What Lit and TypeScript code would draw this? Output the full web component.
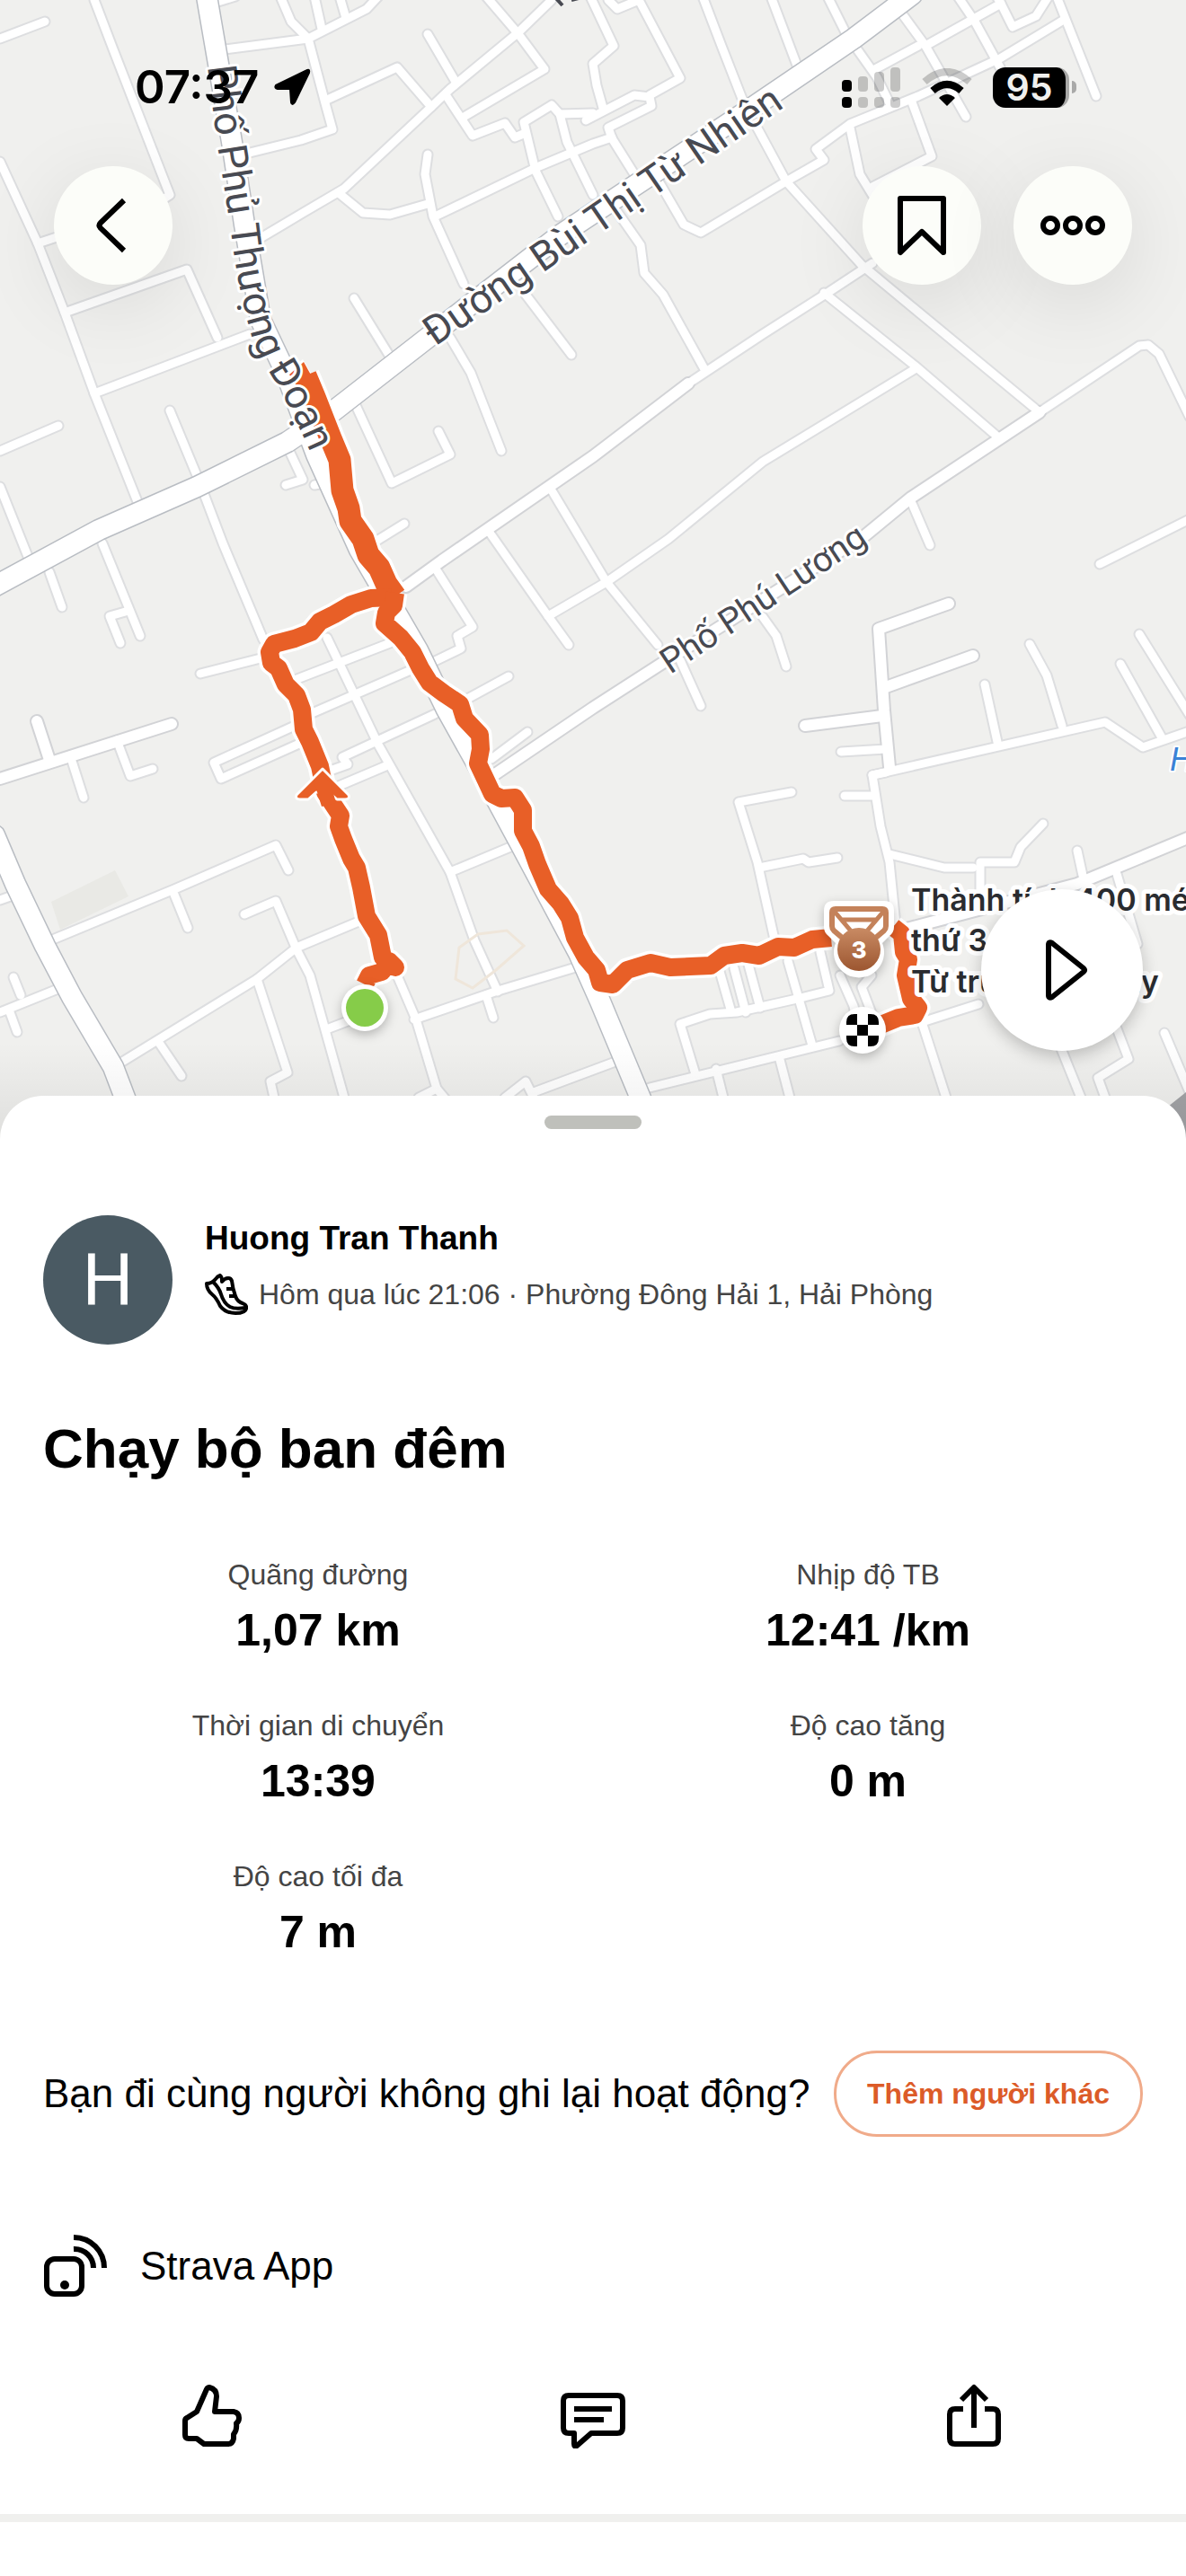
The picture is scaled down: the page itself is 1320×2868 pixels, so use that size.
import { LitElement, html, css, svg } from 'lit'
import { customElement, property } from 'lit/decorators.js'

const MINOR_ROADS = [
  // north-west
  '0,43 50,24',
  '105,0 126,55 189,217 172,228 42,271',
  '0,180 42,271 72,348 105,438 156,566',
  '72,348 208,300 242,376',
  '105,438 278,372',
  '0,502 65,474',
  '0,542 32,622',
  '189,457 221,534 248,605 293,712',
  '114,605 156,708',
  '143,680 122,686 134,716',
  '55,637 69,676',
  // north
  '250,55 343,43 408,10 421,-4',
  '236,4 262,-4',
  '312,-4 324,24 343,43 362,115 370,144 335,156 278,170',
  '350,-4 358,32',
  '378,-4 385,20',
  '364,111 442,75 480,119',
  '476,38 507,91',
  '290,265 337,237 383,210 480,119 501,99 577,36 614,0',
  '541,-4 577,38 606,77 518,129',
  '497,107 526,151 562,137 573,153 585,148',
  '660,217 631,158 623,127 614,117 583,136 596,190 621,241',
  '623,127 660,126',
  '484,241 598,186 660,160 681,153',
  '476,172 473,194 482,241 516,316',
  '377,215 404,237 434,239 476,227',
  '394,332 434,397',
  '585,328 636,395',
  '501,376 524,415 558,502',
  '394,447 436,538 501,506 488,480',
  '322,502 337,534 318,540',
  '350,540 362,538',
  '421,601 450,583',
  '614,546 675,648 732,718',
  '757,735 780,786',
  '545,593 610,686 633,718',
  '610,686 675,648 744,600 849,514 1018,411',
  '486,635 526,698 509,708 513,722 480,738',
  // north-east
  '652,134 706,106 723,108 725,118 677,142 681,154 706,194',
  '732,200 761,250 780,259 875,202 917,178 908,166 946,138 1022,107 1113,65 1184,22',
  '656,-6 683,51 660,71 664,95 671,120',
  '677,0 687,10 711,0 757,87 723,106',
  '782,-4 803,51 828,115 875,202 959,295 1018,344 1157,459',
  '858,-4 889,78',
  '921,-4 942,38 976,86 990,115',
  '974,77 1022,51',
  '1003,14 1030,51 1075,130',
  '1030,51 1114,4 1108,-6',
  '1066,-4 1085,24 1113,75',
  '1112,0 1127,30 1153,18 1167,-4',
  '1176,-4 1220,107',
  '946,142 957,194 971,217',
  '1014,111 1037,174 971,208',
  '685,233 713,273 717,304 738,328 784,411',
  '766,427 849,372 921,326 971,293',
  '917,326 1018,407 1110,486',
  '1157,459 1268,385 1278,384 1290,394 1324,464',
  '1014,558 1035,607',
  '1224,628 1324,578',
  '849,687 864,708 875,742',
  // south-west
  '223,750 290,733',
  '78,841 93,888',
  '130,824 145,864 170,856',
  '328,757 434,716',
  '345,795 455,747',
  '328,808 238,849 246,867 333,828',
  '364,710 421,829 501,971 528,1047 554,1104',
  '370,857 387,851 381,843 484,795',
  '370,878 429,853',
  '501,971 568,943',
  '522,777 566,753',
  '547,845 587,815',
  '61,1045 194,990 307,941 321,969',
  '194,996 209,1033',
  '0,1002 17,996',
  '272,1018 307,1003 330,1057 345,1086 383,1222',
  '133,1184 286,1090 330,1055 404,1024',
  '286,1090 320,1194 301,1204 305,1222',
  '177,1161 202,1198',
  '0,1127 72,1098',
  '15,1088 23,1108',
  '11,1127 19,1149',
  '366,1145 387,1137',
  '442,1086 463,1135 486,1212 496,1224',
  '466,1222 486,1212',
  '461,1135 551,1104 644,1076',
  '541,1108 549,1133',
  '562,1222 585,1204 594,1222',
  '594,1216 685,1182',
  // south-east
  '936,837 986,834',
  '986,860 971,863 980,920 990,960 997,1030',
  '971,863 1230,804 1272,832 1324,814',
  '1096,762 1110,826',
  '1146,717 1165,752 1182,808',
  '1247,739 1294,823',
  '1268,706 1324,796',
  '940,886 974,886',
  '881,882 822,893 843,960 862,1046',
  '845,966 894,956 900,960 932,955',
  '990,951 1051,966 1083,966',
  '1161,917 1136,943 1129,960 1091,960 1091,990',
  '1199,947 1207,984',
  '1243,973 1266,1051',
  '774,1196 757,1140 790,1129 820,1127 887,1112 923,1103 913,1060',
  '723,1211 934,1159',
  '1026,1138 1089,1118',
  '800,1078 814,1127',
  '817,1078 830,1127',
  '833,1074 846,1122',
  '877,1070 904,1164',
  '868,1180 879,1222',
  '797,1190 805,1222',
  '1026,1138 1053,1222',
  '935,1086 950,1120 954,1140',
  '970,1086 959,1099 970,1128 972,1140',
  '1178,1160 1203,1222',
  '1241,1140 1256,1179 1222,1200 1230,1222',
  '1296,1150 1324,1216',
]

const MEDIUM_ROADS = [
  '41,803 55,846',
  '0,867 191,806',
  '452,653 492,624 660,508 766,427',
  '551,862 660,788 736,739 963,596 1014,554 1157,459',
  '1056,672 978,700 984,791 990,854',
  '1083,730 986,765',
  '896,808 982,797',
  '1009,1034 1199,984 1324,932',
]

const MAJOR_ROADS = [
  '229,-10 243,71 258,158 272,250 290,356 318,415 352,506 400,612 465,724 497,790 540,867 581,943 644,1061 668,1115 716,1230',
  '-10,655 110,590 219,542 320,492 372,457 476,376 623,262 828,126 950,43 1015,-6',
  '-6,930 17,984 50,1053 80,1110 126,1188 142,1230',
]

const ROUTE_OUT =
  '406,1096 411,1086 425,1082 433,1070 440,1077 426,1066 421,1041 408,1020 402,988 397,966 391,956 382,934 377,920 379,908 371,896 362,882 ' +
  '356,853 345,826 338,812 336,790 330,774 318,762 310,744 302,738 300,726 305,717 328,711 346,704 356,692 372,684 391,673 413,666 436,665'
const ROUTE_SHARED = '340,418 350,442 368,488 378,512 381,546 388,566 390,580 404,600 410,618 422,632 430,650 440,664'
const ROUTE_BACK =
  '440,660 438,674 430,682 428,694 446,710 459,726 468,744 478,760 494,772 512,784 517,800 534,818 535,834 532,850 541,869 548,884 558,889 573,888 582,902 ' +
  '582,925 591,942 598,962 610,990 624,1006 634,1022 640,1044 652,1066 664,1080 668,1094 682,1096 698,1080 724,1072 746,1077 791,1075 806,1064 826,1061 ' +
  '845,1064 866,1054 884,1055 904,1046 925,1044'
const ROUTE_END = '994,1032 1004,1040 1006,1060 1011,1068 1008,1086 1014,1112 1022,1122 1018,1130 1000,1133 978,1142'

const lines = (cls: string, roads: string[]) =>
  roads.map((points) => svg`<polyline class=${cls} points=${points}></polyline>`)

@customElement('route-map')
export class RouteMap extends LitElement {
  static styles = [
    css`
      :host {
        display: block;
        background: #f0f0ee;
      }

      svg {
        display: block;
        width: 100%;
        height: auto;
      }

      polyline {
        fill: none;
        stroke-linecap: round;
        stroke-linejoin: round;
      }

      .minor-case { stroke: #dddee0; stroke-width: 13px; }
      .minor { stroke: #ffffff; stroke-width: 9px; }
      .medium-case { stroke: #d2d3d6; stroke-width: 16px; }
      .medium { stroke: #ffffff; stroke-width: 12px; }
      .major-case { stroke: #b9bdc3; stroke-width: 25px; }
      .major { stroke: #ffffff; stroke-width: 22px; }

      .halo { stroke: #ffffff; stroke-width: 27px; stroke-linecap: butt; }
      .route { stroke: #e85f27; stroke-width: 20px; stroke-linecap: butt; }
      .halo.wide { stroke-width: 32px; }
      .route.wide { stroke-width: 25px; }

      text {
        paint-order: stroke;
        stroke: #ffffff;
        stroke-linejoin: round;
      }

      .street {
        font: 400 39px Roboto, sans-serif;
        fill: #484a52;
        stroke-width: 6px;
      }

      .street.major-name {
        font-size: 45px;
      }

      .place {
        font: 600 34px Inter, sans-serif;
        fill: #2a2c30;
        stroke-width: 10px;
      }

      .water {
        font: italic 500 36px "Liberation Sans", sans-serif;
        fill: #3b82d6;
        stroke-width: 4px;
      }

      .rank {
        font: 800 26px Inter, sans-serif;
        fill: #ffffff;
        stroke: none;
        text-anchor: middle;
      }

      .marker {
        filter: drop-shadow(0 4px 6px rgba(0, 0, 0, 0.25));
      }
    `
  ];

  render () {
    return html`
      <svg viewBox="0 0 1320 1280" role="img" aria-label="Bản đồ">
        <defs>
          <path id="street-1" d="M231 74 L242 162 L257 257 Q264 318 280 374 Q290 402 305 423 Q330 464 365 550"></path>
          <path id="street-2" d="M484 386 L920 87"></path>
          <path id="street-3" d="M746 751 L1000 582"></path>
          <linearGradient id="bronze" x1="0" y1="0" x2="0" y2="1">
            <stop offset="0" stop-color="#c98b64"></stop>
            <stop offset="1" stop-color="#9c5630"></stop>
          </linearGradient>
          <linearGradient id="fade" x1="0" y1="0" x2="0" y2="1">
            <stop offset="0" stop-color="#000000" stop-opacity="0"></stop>
            <stop offset="1" stop-color="#000000" stop-opacity="0.08"></stop>
          </linearGradient>
        </defs>

        <polygon points="57,1004 128,969 143,998 67,1035" fill="#e9e9e5"></polygon>
        ${lines('minor-case', MINOR_ROADS)}
        ${lines('medium-case', MEDIUM_ROADS)}
        ${lines('minor', MINOR_ROADS)}
        ${lines('major-case', MAJOR_ROADS)}
        ${lines('medium', MEDIUM_ROADS)}
        ${lines('major', MAJOR_ROADS)}
        <polygon points="511,1055 532,1040 564,1036 583,1053 552,1080 526,1100 507,1090"
          fill="none" stroke="#efe6da" stroke-width="3"></polygon>
        <polygon points="1290,1240 1320,1216 1320,1280 1290,1280" fill="#a2a3a6"></polygon>
        <path d="M617 -4 L626 6 M636 0 L648 -3" stroke="#484a52" stroke-width="4" fill="none"></path>

        <path d="M337 400 L318 416 L342 452 L362 442 Z" fill="#ffffff"></path>
        ${lines('halo wide', [ROUTE_SHARED])}
        ${lines('halo', [ROUTE_OUT, ROUTE_BACK, ROUTE_END])}
        <path d="M338 403 L322 417 L342 448 L362 446 Z" fill="#e85f27"></path>
        ${lines('route wide', [ROUTE_SHARED])}
        ${lines('route', [ROUTE_OUT, ROUTE_BACK, ROUTE_END])}
        <path d="M359 856 L388 885 Q390 890 384 890 L375 890 L366 882 H352 L343 890 H334 Q328 890 330 885 Z"
          fill="#e85f27" stroke="#ffffff" stroke-width="3" stroke-linejoin="round"></path>
        <path d="M359 862 L368 872 L374 894 L358 898 L350 872 Z" fill="#e85f27"></path>

        <text class="street major-name"><textPath href="#street-1">Phố Phủ Thượng Đoạn</textPath></text>
        <text class="street major-name"><textPath href="#street-2">Đường Bùi Thị Từ Nhiên</textPath></text>
        <text class="street"><textPath href="#street-3">Phố Phú Lương</textPath></text>
        <text class="water" x="1302" y="858">H</text>
        <text class="place" x="1014" y="1014">Thành tích 400 mét</text>
        <text class="place" x="1014" y="1059">thứ 3</text>
        <text class="place" x="1014" y="1105">Từ trước đến nay</text>

        <rect y="1160" width="1320" height="120" fill="url(#fade)"></rect>

        <circle class="marker" cx="406" cy="1122" r="26" fill="#ffffff"></circle>
        <circle cx="406" cy="1122" r="21" fill="#86cc49"></circle>

        <g class="marker">
          <circle cx="960" cy="1147" r="26" fill="#ffffff"></circle>
        </g>
        <path d="M954 1129 V1141 H942 V1138 Q942 1129 951 1129 Z M966 1129 H969 Q978 1129 978 1138 V1141 H966 Z
          M942 1153 H954 V1165 H951 Q942 1165 942 1156 Z M966 1153 H978 V1156 Q978 1165 969 1165 H966 Z M954 1141 H966 V1153 H954 Z"></path>

        <g class="marker">
          <path d="M928 1003 H984 Q995 1003 995 1014 V1032 Q995 1038 990 1042 L982 1050 A28 28 0 1 1 930 1050 L922 1042 Q917 1038 917 1032 V1014 Q917 1003 928 1003 Z"
            fill="#ffffff"></path>
        </g>
        <g fill="none" stroke="#c4825a" stroke-width="6">
          <path d="M942 1048 L928 1036 Q926 1034 926 1031 V1016 Q926 1012 930 1012 H982 Q986 1012 986 1016 V1031 Q986 1034 984 1036 L970 1048"></path>
          <path d="M928 1014 L950 1040 M984 1014 L962 1040 M936 1024 H976" stroke-width="5"></path>
        </g>
        <circle cx="956" cy="1057" r="24" fill="url(#bronze)"></circle>
        <text class="rank" x="956" y="1067">3</text>
      </svg>
    `
  }
}

@customElement('status-bar')
export class StatusBar extends LitElement {
  static styles = [
    css`
      :host {
        display: flex;
        justify-content: space-between;
        align-items: center;
        padding: 0 122px 0 150px;
        height: 60px;
        color: #000000;
      }

      .time, .system {
        display: flex;
        align-items: center;
      }

      .time {
        gap: 16px;
        font: 600 51px/60px Inter, sans-serif;
      }

      .system {
        gap: 22px;
      }

      svg {
        display: block;
      }

      .battery {
        display: flex;
        align-items: center;
        gap: 3px;
      }

      .level {
        width: 81px;
        height: 45px;
        border-radius: 14px;
        border-right: 4px solid #a9a9a8;
        background: #000000;
        color: #f0f0ee;
        font: 600 41px/45px Inter, sans-serif;
        text-align: center;
      }

      .nub {
        width: 5px;
        height: 14px;
        border-radius: 0 5px 5px 0;
        background: #a9a9a8;
      }
    `
  ];

  render () {
    return html`
      <div class="time">
        <span>07:37</span>
        <svg width="42" height="42" viewBox="0 0 42 42">
          <path d="M38 2 L3 19 Q1 22 5 23 L19 23 L20 38 Q21 42 24 38 L40 5 Q41 1 38 2 Z"
            stroke="#000000" stroke-width="2" stroke-linejoin="round"></path>
        </svg>
      </div>
      <div class="system">
        <svg width="66" height="45" viewBox="0 0 66 45">
          <g fill="#000000">
            <rect y="14" width="11" height="13" rx="4"></rect>
            <rect y="33" width="11" height="12" rx="4"></rect>
          </g>
          <g fill="#000000" fill-opacity="0.2">
            <rect x="18" y="10" width="11" height="17" rx="4"></rect>
            <rect x="36" y="5" width="11" height="22" rx="4"></rect>
            <rect x="54" y="0" width="11" height="27" rx="4"></rect>
            <rect x="18" y="33" width="11" height="12" rx="4"></rect>
            <rect x="36" y="33" width="11" height="12" rx="4"></rect>
            <rect x="54" y="33" width="11" height="12" rx="4"></rect>
          </g>
        </svg>
        <svg width="58" height="42" viewBox="0 0 58 42" fill="none" stroke="#000000" stroke-width="8">
          <path d="M4 15 Q29 -7 54 15" stroke-opacity="0.2"></path>
          <path d="M13 25 Q29 11 45 25"></path>
          <path d="M20 33 Q29 25 38 33 L29 42 Z" fill="#000000" stroke="none"></path>
        </svg>
        <div class="battery">
          <div class="level">95</div>
          <div class="nub"></div>
        </div>
      </div>
    `
  }
}

@customElement('activity-stat')
export class ActivityStat extends LitElement {
  @property() label = ''
  @property() value = ''

  static styles = [
    css`
      :host {
        display: flex;
        flex-direction: column;
        align-items: center;
        gap: 12px;
      }

      .label {
        font-size: 32px;
        line-height: 40px;
        color: #444444;
      }

      .value {
        font-size: 50px;
        font-weight: 700;
        line-height: 60px;
      }
    `
  ];

  render () {
    return html`
      <div class="label">${this.label}</div>
      <div class="value">${this.value}</div>
    `
  }
}

@customElement('app-root')
export class AppRoot extends LitElement {
  stats = [
    { label: 'Quãng đường', value: '1,07 km' },
    { label: 'Nhịp độ TB', value: '12:41 /km' },
    { label: 'Thời gian di chuyển', value: '13:39' },
    { label: 'Độ cao tăng', value: '0 m' },
    { label: 'Độ cao tối đa', value: '7 m' },
  ]

  static styles = [
    css`
      :host {
        display: block;
        min-height: 100vh;
        background: #ffffff;
        color: #000000;
        font-family: "Liberation Sans", sans-serif;
        overflow: hidden;
      }

      button {
        display: flex;
        align-items: center;
        justify-content: center;
        margin: 0;
        padding: 0;
        border: none;
        background: none;
        color: inherit;
        font-family: inherit;
        cursor: pointer;
      }

      svg {
        display: block;
        fill: none;
        stroke: #000000;
        stroke-width: 6px;
      }

      h1, h2, p {
        margin: 0;
      }

      .hero {
        position: relative;
      }

      /* floats over the map */
      .overlay {
        position: absolute;
        inset: 0 0 60px;
        display: flex;
        flex-direction: column;
      }

      status-bar {
        margin-top: 67px;
      }

      .nav {
        display: flex;
        gap: 36px;
        margin-top: 58px;
        padding: 0 60px;
      }

      .round {
        width: 132px;
        height: 132px;
        border-radius: 50%;
        background: #fcfdf9;
        box-shadow: 0 20px 90px rgba(0, 0, 0, 0.1);
      }

      .back {
        margin-right: auto;
      }

      .play {
        width: 180px;
        height: 180px;
        margin: auto 48px 50px auto;
        border-radius: 50%;
        background: #ffffff;
        box-shadow: 0 6px 18px rgba(0, 0, 0, 0.22);
      }

      .sheet {
        position: relative;
        margin-top: -60px;
        padding-top: 22px;
        border-radius: 48px 48px 0 0;
        background: #ffffff;
      }

      .handle {
        width: 108px;
        height: 15px;
        margin: 0 auto 96px;
        border-radius: 8px;
        background: #bfc0bb;
      }

      .content {
        padding: 0 48px;
      }

      .athlete {
        display: flex;
        gap: 36px;
      }

      .avatar {
        flex: none;
        width: 144px;
        height: 144px;
        border-radius: 50%;
        background: #4a5a63;
        color: #ffffff;
        font: 400 80px/144px Roboto, sans-serif;
        text-align: center;
      }

      .who {
        display: flex;
        flex-direction: column;
        gap: 12px;
      }

      .name {
        font-size: 37px;
        font-weight: 700;
        line-height: 52px;
      }

      .meta {
        display: flex;
        align-items: center;
        gap: 12px;
        font-size: 32px;
        line-height: 40px;
        color: #444444;
      }

      .meta svg {
        stroke-width: 4px;
      }

      .title {
        margin-top: 76px;
        font-size: 62px;
        font-weight: 700;
        line-height: 80px;
      }

      .stats {
        display: grid;
        grid-template-columns: 1fr 1fr;
        row-gap: 56px;
        margin-top: 80px;
      }

      .invite {
        display: flex;
        align-items: center;
        justify-content: space-between;
        gap: 12px;
        margin-top: 102px;
        font-size: 44px;
        line-height: 56px;
      }

      .invite button {
        flex: none;
        height: 96px;
        padding: 0 34px;
        border: 3px solid #f0ab8a;
        border-radius: 48px;
        color: #dc5b28;
        font-size: 32px;
        font-weight: 700;
      }

      .device {
        display: flex;
        align-items: center;
        gap: 36px;
        margin-top: 108px;
        font-size: 44px;
        line-height: 56px;
      }

      .actions {
        display: grid;
        grid-template-columns: repeat(3, 1fr);
        margin-top: 59px;
        padding: 0 24px 37px;
      }

      .actions button {
        height: 144px;
      }

      .divider {
        height: 9px;
        background: #f0f0ee;
      }
    `
  ];

  render () {
    return html`
      <div class="hero">
        <route-map></route-map>
        <div class="overlay">
          <status-bar></status-bar>
          <div class="nav">
            <button class="round back" aria-label="Quay lại">
              <svg width="72" height="72" viewBox="0 0 72 72">
                <path d="M48 8 L22 33 Q19 36 22 39 L48 64"></path>
              </svg>
            </button>
            <button class="round" aria-label="Lưu">
              <svg width="72" height="72" viewBox="0 0 72 72" stroke-linejoin="round">
                <path d="M12 6 H60 V66 L36 43 L12 66 Z"></path>
              </svg>
            </button>
            <button class="round" aria-label="Thêm">
              <svg width="72" height="72" viewBox="0 0 72 72">
                <circle cx="11" cy="36" r="8"></circle>
                <circle cx="36" cy="36" r="8"></circle>
                <circle cx="61" cy="36" r="8"></circle>
              </svg>
            </button>
          </div>
          <button class="play" aria-label="Phát">
            <svg width="72" height="72" viewBox="0 0 72 72" stroke-linejoin="round">
              <path d="M21 8 Q21 4 25 6 L60 34 Q62 36 60 38 L25 66 Q21 68 21 64 Z"></path>
            </svg>
          </button>
        </div>
      </div>

      <main class="sheet">
        <div class="handle"></div>
        <div class="content">
          <div class="athlete">
            <div class="avatar">H</div>
            <div class="who">
              <h2 class="name">Huong Tran Thanh</h2>
              <div class="meta">
                <svg width="48" height="48" viewBox="0 0 48 48" stroke-linejoin="round">
                  <path d="M2 12 Q8 12 12 7 Q14 4 17 3 Q19 4 19 10 Q22 6 26 6 Q29 6 30 9 Q31 18 34 26 Q36 32 42 34 Q47 36 46 40 Q45 45 34 45 Q23 45 17 37 Q13 28 8 24 Q2 19 2 12 Z"></path>
                  <path d="M9 10 Q16 17 18 24 Q21 34 28 38 Q34 41 45 39"></path>
                  <path d="M24 18 H32 M27 26 H34"></path>
                </svg>
                <span>Hôm qua lúc 21:06 · Phường Đông Hải 1, Hải Phòng</span>
              </div>
            </div>
          </div>

          <h1 class="title">Chạy bộ ban đêm</h1>

          <div class="stats">
            ${this.stats.map((stat) => html`
              <activity-stat label=${stat.label} value=${stat.value}></activity-stat>
            `)}
          </div>

          <div class="invite">
            <p>Bạn đi cùng người không ghi lại hoạt động?</p>
            <button>Thêm người khác</button>
          </div>

          <div class="device">
            <svg width="72" height="72" viewBox="0 0 72 72">
              <rect x="4" y="28" width="39" height="39" rx="9"></rect>
              <circle cx="24" cy="57" r="5" fill="#000000" stroke="none"></circle>
              <path d="M34 17 A21 21 0 0 1 56 38 M34 4 A34 34 0 0 1 68 38"></path>
            </svg>
            <span>Strava App</span>
          </div>
        </div>

        <div class="actions">
          <button aria-label="Thích">
            <svg width="72" height="72" viewBox="0 0 72 72" stroke-linejoin="round">
              <path d="M6 41 Q6 39 8 38 L19 31 L30 6 Q31 4 33 4 Q41 6 41 14 L39 31 H60 Q66 32 66 38 Q66 42 63 44 Q64 52 60 56 V61 Q59 67 54 67 H27 L19 61 H10 Q6 61 6 57 Z"></path>
            </svg>
          </button>
          <button aria-label="Bình luận">
            <svg width="72" height="72" viewBox="0 0 72 72" stroke-linejoin="round">
              <path d="M9 13 H63 Q69 13 69 19 V49 Q69 55 63 55 H34 L18 69 Q15 71 15 67 V55 H9 Q3 55 3 49 V19 Q3 13 9 13 Z"></path>
              <path d="M15 28 H57 M15 40 H48"></path>
            </svg>
          </button>
          <button aria-label="Chia sẻ">
            <svg width="72" height="72" viewBox="0 0 72 72" stroke-linejoin="round">
              <path d="M24 28 H15 Q9 28 9 34 V61 Q9 67 15 67 H57 Q63 67 63 61 V34 Q63 28 57 28 H48"></path>
              <path d="M36 49 V5 M22 18 L36 4 L50 18"></path>
            </svg>
          </button>
        </div>
        <div class="divider"></div>
      </main>
    `
  }
}
